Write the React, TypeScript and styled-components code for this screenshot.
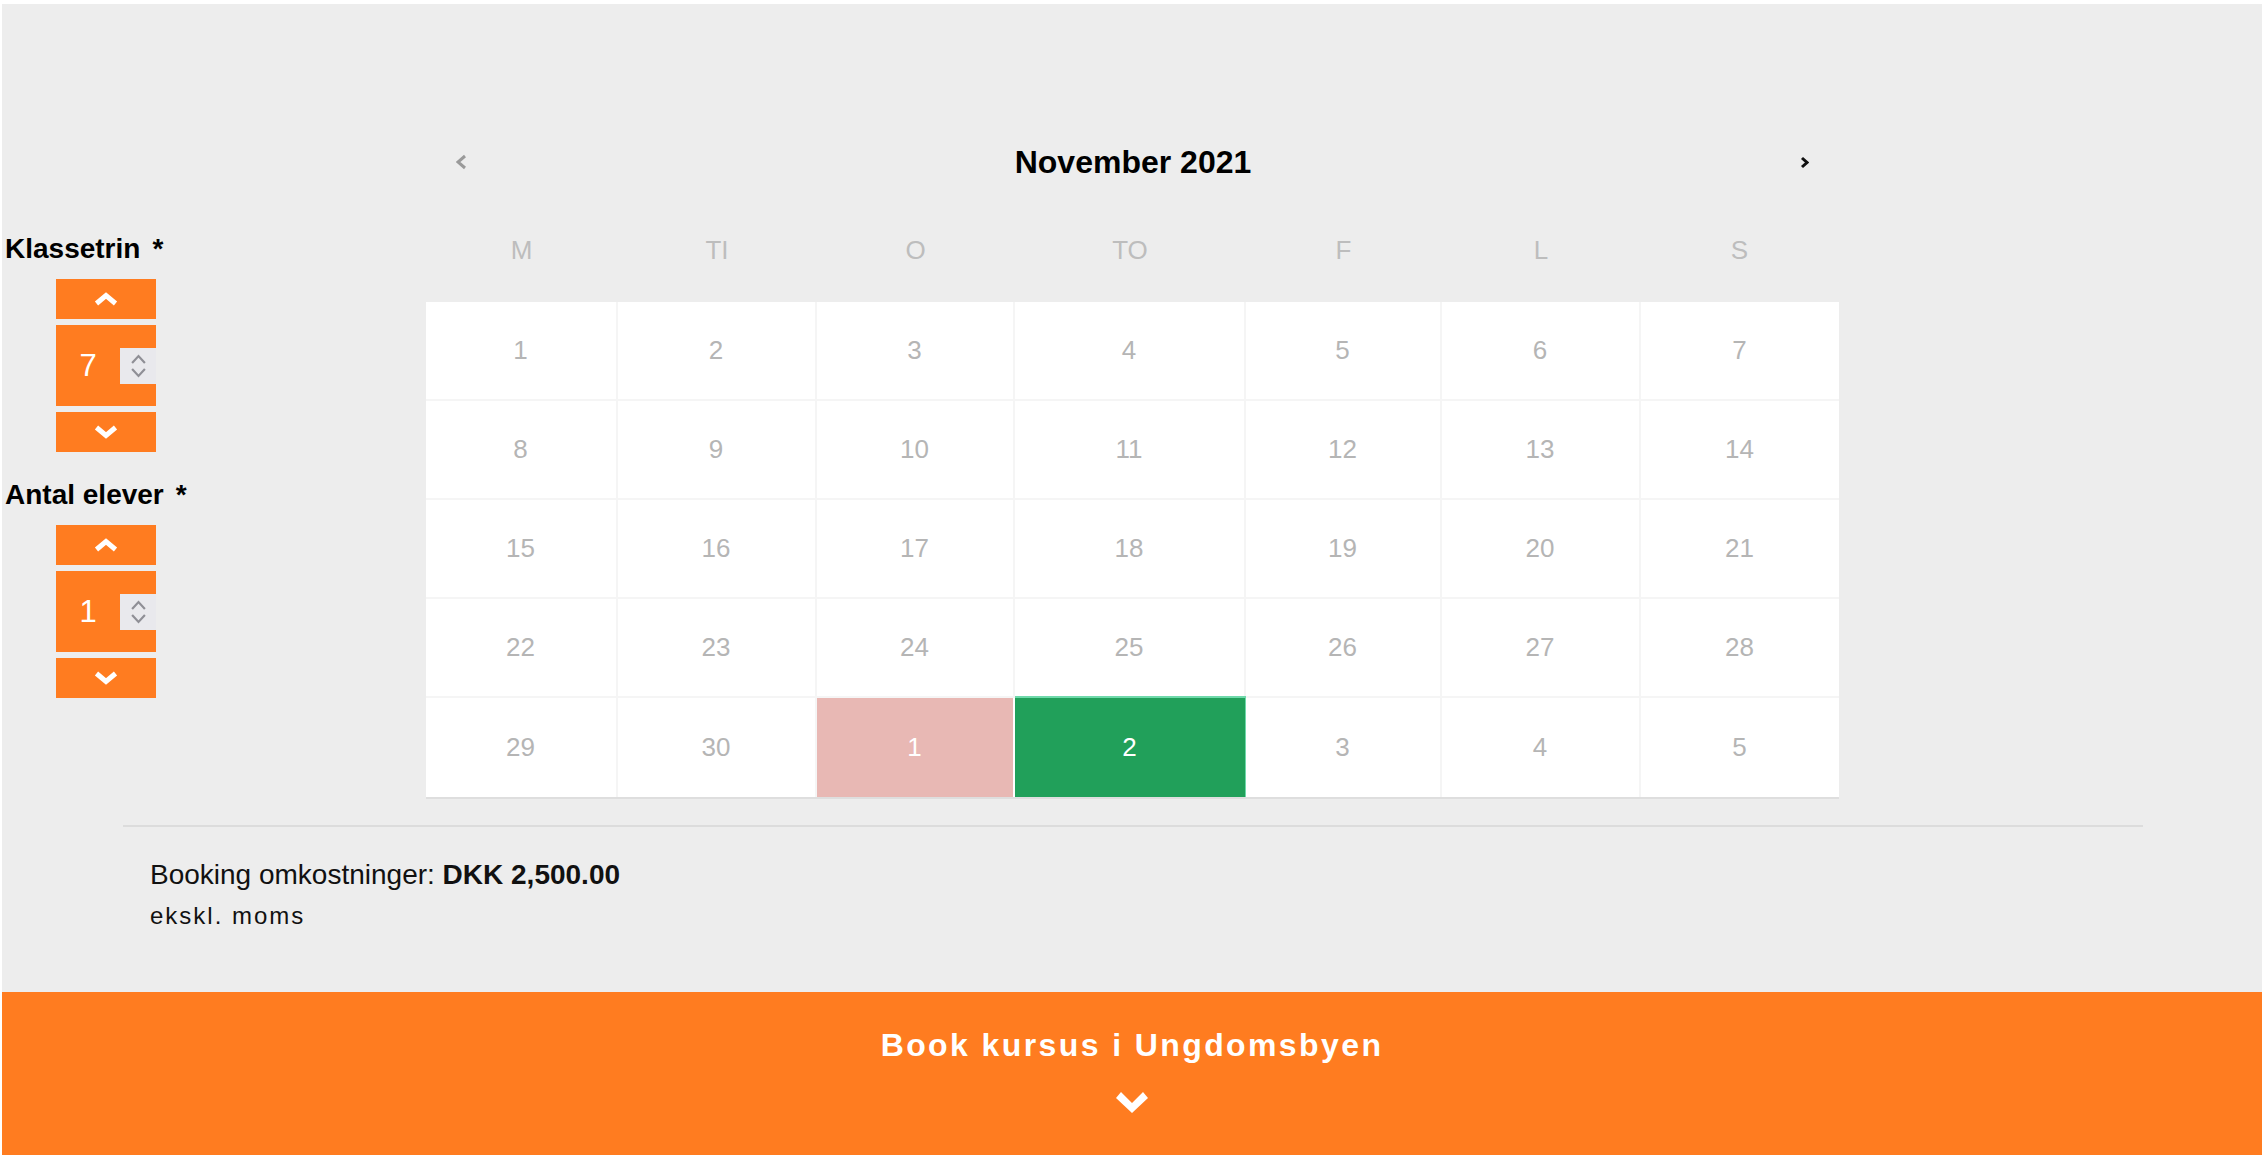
import React from "react";
import styled, { createGlobalStyle } from "styled-components";

const ORANGE = "#ff7c20";
const BG = "#ededed";

const GlobalStyle = createGlobalStyle`
  html, body {
    margin: 0;
    padding: 0;
    background: #ffffff;
  }
  body {
    font-family: "Liberation Sans", Arial, Helvetica, sans-serif;
    color: #000;
  }
  * { box-sizing: border-box; }
`;

const Page = styled.div`
  height: 100vh;
  padding: 4px 2px 1px 2px;
  display: flex;
  flex-direction: column;
`;

const Main = styled.main`
  flex: 1;
  background: ${BG};
  display: flex;
  flex-direction: column;
`;

const TopSection = styled.div`
  display: grid;
  grid-template-columns: 1fr 1413px 1fr;
  padding-top: 118px;
`;

const Sidebar = styled.aside`
  padding: 111px 0 0 3px;
  display: flex;
  flex-direction: column;
`;

const FieldLabel = styled.label`
  display: block;
  font-size: 28px;
  line-height: 32px;
  font-weight: 700;
  margin-bottom: 14px;
  white-space: nowrap;
`;

const Required = styled.span`
  margin-left: 12px;
`;

const Stepper = styled.div`
  display: flex;
  flex-direction: column;
  gap: 6px;
  width: 100px;
  margin-left: 51px;
  margin-bottom: 27px;
`;

const StepButton = styled.button`
  height: 40px;
  width: 100%;
  border: none;
  padding: 0;
  background: ${ORANGE};
  display: flex;
  align-items: center;
  justify-content: center;
  cursor: pointer;
`;

const ValueBox = styled.div`
  height: 81px;
  background: ${ORANGE};
  display: flex;
  align-items: center;
`;

const Value = styled.span`
  flex: 1;
  text-align: center;
  color: #ffffff;
  font-size: 31px;
  line-height: 36px;
`;

const SpinBox = styled.div`
  width: 36px;
  height: 36px;
  background: #e9e9ed;
  display: flex;
  flex-direction: column;
  align-items: center;
  justify-content: center;
  gap: 4px;
`;

const Calendar = styled.section`
  display: flex;
  flex-direction: column;
`;

const CalHeader = styled.div`
  height: 80px;
  display: flex;
  align-items: center;
  justify-content: space-between;
  padding: 0 28px 0 30px;
`;

const NavButton = styled.button`
  border: none;
  background: none;
  padding: 0;
  width: 12px;
  height: 18px;
  display: flex;
  align-items: center;
  justify-content: center;
  cursor: pointer;
`;

const MonthTitle = styled.h2`
  margin: 0;
  font-size: 32px;
  line-height: 40px;
  font-weight: 700;
`;

const WeekRow = styled.div`
  display: grid;
  grid-template-columns: 192px 199px 198px 231px 196px 199px 198px;
  height: 96px;
  margin-bottom: 4px;
  align-items: center;
`;

const WeekDay = styled.div`
  text-align: center;
  font-size: 26px;
  line-height: 32px;
  color: #bdbdbd;
`;

const DayGrid = styled.div`
  display: grid;
  grid-template-columns: 192px 199px 198px 231px 196px 199px 198px;
  grid-auto-rows: 99px;
  background: #ffffff;
  border-bottom: 2px solid #dedede;
`;

type DayKind = "normal" | "blocked" | "selected";

const DayCell = styled.div<{ $kind: DayKind; $lastRow: boolean; $lastCol: boolean }>`
  display: flex;
  align-items: center;
  justify-content: center;
  font-size: 26px;
  line-height: 32px;
  padding-bottom: 2px;
  color: ${(p) => (p.$kind === "normal" ? "#b5b5b5" : "#ffffff")};
  background: ${(p) =>
    p.$kind === "blocked" ? "#e8b8b4" : p.$kind === "selected" ? "#21a05a" : "#ffffff"};
  border-right: ${(p) =>
    p.$lastCol
      ? "none"
      : p.$kind === "selected"
      ? "1px solid #6fd9ab"
      : p.$kind === "blocked"
      ? "2px solid #ffffff"
      : "2px solid #f5f5f5"};
  border-bottom: ${(p) => (p.$lastRow ? "none" : "2px solid #f5f5f5")};
  border-top: ${(p) => (p.$kind === "selected" ? "2px solid #6fd9ab" : "none")};
  margin-top: ${(p) => (p.$kind === "selected" ? "-2px" : "0")};
`;

const Summary = styled.div`
  margin: 26px 119px 0 121px;
  border-top: 2px solid #dcdcdc;
  padding: 32px 27px 0 27px;
`;

const CostLine = styled.p`
  margin: 0;
  font-size: 28px;
  line-height: 32px;
  color: #111;
`;

const CostValue = styled.strong`
  font-weight: 700;
`;

const VatNote = styled.p`
  margin: 9px 0 0 0;
  font-size: 24px;
  line-height: 32px;
  letter-spacing: 2px;
  color: #111;
`;

const Footer = styled.footer`
  flex-shrink: 0;
  height: 163px;
  background: ${ORANGE};
  display: flex;
  flex-direction: column;
  align-items: center;
  padding-top: 33px;
`;

const FooterTitle = styled.h3`
  margin: 0;
  color: #ffffff;
  font-size: 32px;
  line-height: 40px;
  font-weight: 700;
  letter-spacing: 2.4px;
`;

const FooterChevron = styled.div`
  margin-top: 27px;
  display: flex;
`;

const Chevron: React.FC<{ dir: "up" | "down"; w: number; h: number; stroke: number; color: string }> = ({
  dir,
  w,
  h,
  stroke,
  color,
}) => {
  const pad = stroke / 2;
  const pts =
    dir === "up"
      ? `${pad},${h - pad} ${w / 2},${pad + 1} ${w - pad},${h - pad}`
      : `${pad},${pad} ${w / 2},${h - pad - 1} ${w - pad},${pad}`;
  return (
    <svg width={w} height={h} viewBox={`0 0 ${w} ${h}`}>
      <polyline points={pts} fill="none" stroke={color} strokeWidth={stroke} strokeLinejoin="miter" />
    </svg>
  );
};

const SideArrow: React.FC<{ dir: "left" | "right"; color: string; w: number; h: number }> = ({ dir, color, w, h }) => {
  const pts = dir === "left" ? `${w - 2},2 2,${h / 2} ${w - 2},${h - 2}` : `2,2 ${w - 2},${h / 2} 2,${h - 2}`;
  return (
    <svg width={w} height={h} viewBox={`0 0 ${w} ${h}`}>
      <polyline points={pts} fill="none" stroke={color} strokeWidth={3} />
    </svg>
  );
};

const BigChevron: React.FC = () => (
  <svg width="32" height="21" viewBox="0 0 32 21">
    <path d="M0 6 L5 0 L16 11 L27 0 L32 6 L16 21 Z" fill="#ffffff" />
  </svg>
);

const NumberStepper: React.FC<{ label: string; value: number }> = ({ label, value }) => (
  <>
    <FieldLabel>
      {label}
      <Required>*</Required>
    </FieldLabel>
    <Stepper>
      <StepButton aria-label="op">
        <Chevron dir="up" w={24} h={14} stroke={5} color="#ffffff" />
      </StepButton>
      <ValueBox>
        <Value>{value}</Value>
        <SpinBox>
          <Chevron dir="up" w={15} h={10} stroke={2.2} color="#8f8f96" />
          <Chevron dir="down" w={15} h={10} stroke={2.2} color="#8f8f96" />
        </SpinBox>
      </ValueBox>
      <StepButton aria-label="ned">
        <Chevron dir="down" w={24} h={14} stroke={5} color="#ffffff" />
      </StepButton>
    </Stepper>
  </>
);

const weekdays = ["M", "TI", "O", "TO", "F", "L", "S"];

const weeks: { n: number; kind: DayKind }[][] = [
  [1, 2, 3, 4, 5, 6, 7].map((n) => ({ n, kind: "normal" as DayKind })),
  [8, 9, 10, 11, 12, 13, 14].map((n) => ({ n, kind: "normal" as DayKind })),
  [15, 16, 17, 18, 19, 20, 21].map((n) => ({ n, kind: "normal" as DayKind })),
  [22, 23, 24, 25, 26, 27, 28].map((n) => ({ n, kind: "normal" as DayKind })),
  [
    { n: 29, kind: "normal" },
    { n: 30, kind: "normal" },
    { n: 1, kind: "blocked" },
    { n: 2, kind: "selected" },
    { n: 3, kind: "normal" },
    { n: 4, kind: "normal" },
    { n: 5, kind: "normal" },
  ],
];

export default function App() {
  return (
    <>
      <GlobalStyle />
      <Page>
        <Main>
          <TopSection>
            <Sidebar>
              <NumberStepper label="Klassetrin" value={7} />
              <NumberStepper label="Antal elever" value={1} />
            </Sidebar>
            <Calendar>
              <CalHeader>
                <NavButton aria-label="forrige">
                  <SideArrow dir="left" color="#9a9a9a" w={11} h={16} />
                </NavButton>
                <MonthTitle>November 2021</MonthTitle>
                <NavButton aria-label="næste">
                  <SideArrow dir="right" color="#111111" w={9} h={13} />
                </NavButton>
              </CalHeader>
              <WeekRow>
                {weekdays.map((d) => (
                  <WeekDay key={d}>{d}</WeekDay>
                ))}
              </WeekRow>
              <DayGrid>
                {weeks.map((week, wi) =>
                  week.map((day, di) => (
                    <DayCell
                      key={`${wi}-${di}`}
                      $kind={day.kind}
                      $lastRow={wi === weeks.length - 1}
                      $lastCol={di === 6}
                    >
                      {day.n}
                    </DayCell>
                  ))
                )}
              </DayGrid>
            </Calendar>
            <div />
          </TopSection>
          <Summary>
            <CostLine>
              Booking omkostninger: <CostValue>DKK 2,500.00</CostValue>
            </CostLine>
            <VatNote>ekskl. moms</VatNote>
          </Summary>
        </Main>
        <Footer>
          <FooterTitle>Book kursus i Ungdomsbyen</FooterTitle>
          <FooterChevron>
            <BigChevron />
          </FooterChevron>
        </Footer>
      </Page>
    </>
  );
}
